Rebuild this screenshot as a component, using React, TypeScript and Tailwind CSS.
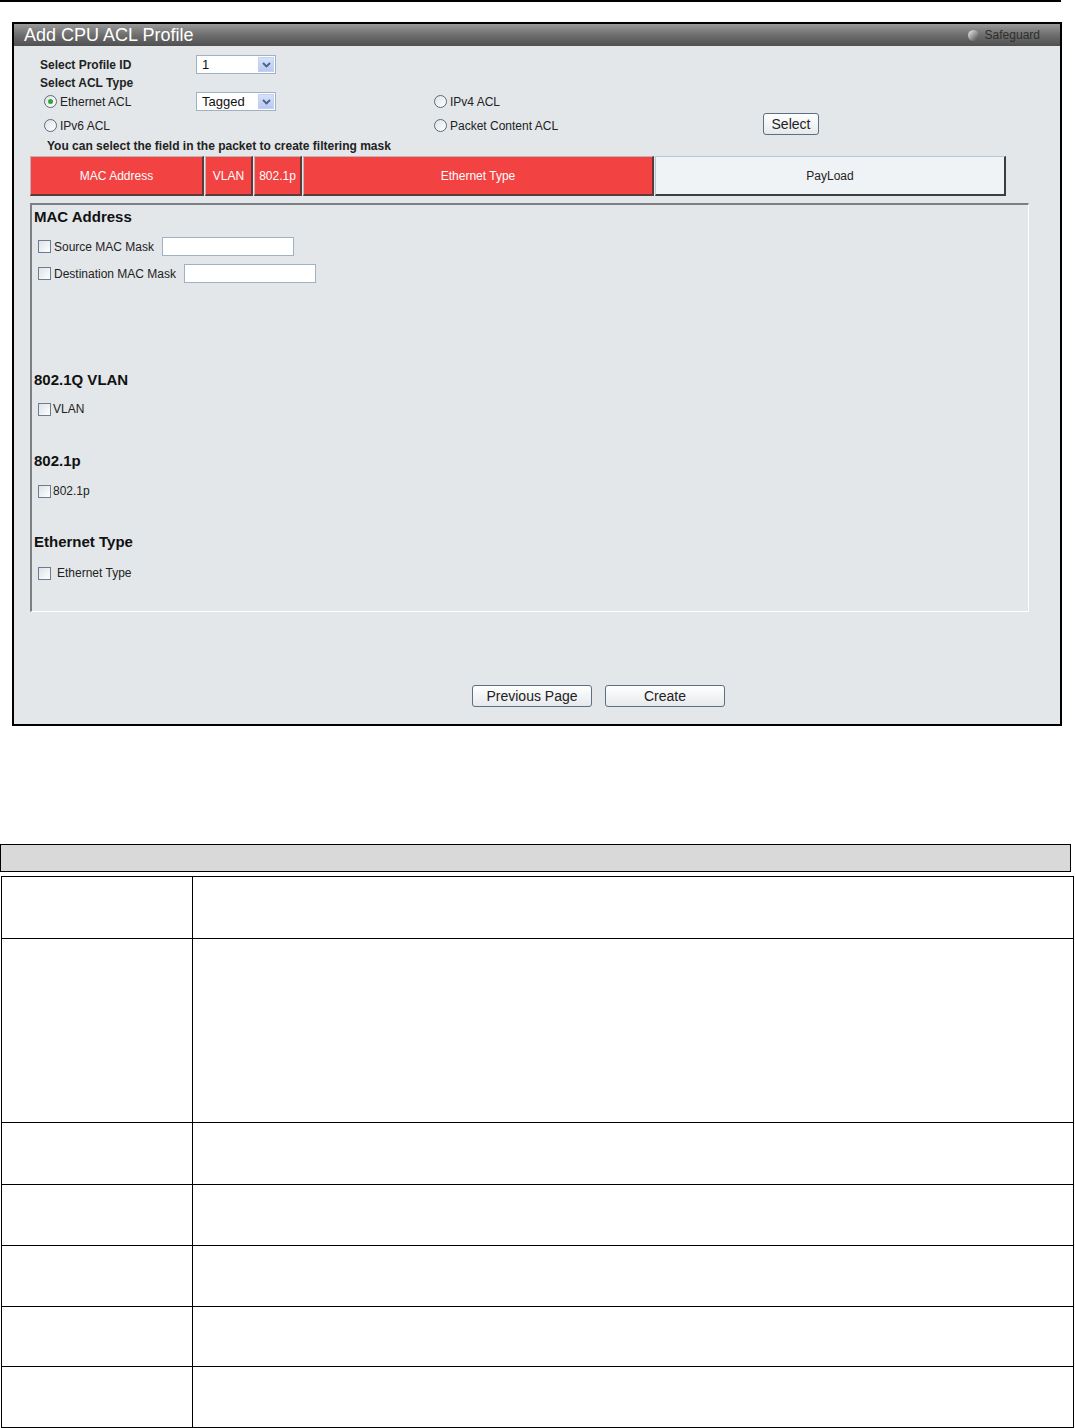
import React from 'react';

const FONT = { fontFamily: '"Liberation Sans", Arial, sans-serif' };

function Radio({ checked }: { checked?: boolean }) {
  return (
    <span className="inline-flex w-[13px] h-[13px] rounded-full border border-[#5a6a7a] bg-gradient-to-br from-[#dfe4e8] to-white items-center justify-center shrink-0">
      {checked && <span className="w-[5px] h-[5px] rounded-full bg-[#2fa83a]" />}
    </span>
  );
}

function Check() {
  return (
    <span className="inline-block w-[13px] h-[13px] border border-[#6b7d8e] bg-gradient-to-br from-[#dde3e8] to-white shrink-0" />
  );
}

function Dropdown({ value }: { value: string }) {
  return (
    <div className="w-[80px] h-[19px] border border-[#9fb1c4] bg-white flex items-center justify-between pl-[5px] pr-[1px]">
      <span className="text-[13px] text-[#111]">{value}</span>
      <span className="w-[16px] h-[15px] bg-gradient-to-b from-[#d6e2fb] to-[#b7c9f3] border border-[#c4d2ef] flex items-center justify-center">
        <svg width="9" height="6" viewBox="0 0 9 6">
          <path d="M1 1 L4.5 4.5 L8 1" fill="none" stroke="#4d6185" strokeWidth="1.8" />
        </svg>
      </span>
    </div>
  );
}

function Btn({ label, className }: { label: string; className: string }) {
  return (
    <button
      className={`h-[22px] border border-[#5c6f84] rounded-[3px] bg-gradient-to-b from-white to-[#e6e9ec] text-[14px] text-[#222] leading-none ${className}`}
    >
      {label}
    </button>
  );
}

function Seg({ label, w, payload }: { label: string; w: string; payload?: boolean }) {
  return (
    <div
      className={`${w} h-full flex items-center justify-center text-[12px] border-t border-l border-r-2 border-b-2 ${
        payload
          ? 'bg-[#f0f3f6] text-[#222] border-t-[#b8cad6] border-l-[#b8cad6] border-r-[#3d3d3d] border-b-[#3d3d3d]'
          : 'bg-[#f24242] text-white border-t-[#c9b0b0] border-l-[#c9b0b0] border-r-[#5a3a3a] border-b-[#5a3a3a]'
      }`}
    >
      {label}
    </div>
  );
}

export default function App() {
  const rowHeights = [62, 184, 62, 61, 61, 60, 61];

  return (
    <div className="w-[1075px] h-[1428px] bg-white overflow-hidden" style={FONT}>
      <div className="w-[1061px] h-[2px] bg-black" />

      {/* panel */}
      <div className="ml-[12px] mt-[20px] w-[1050px] h-[704px] border-2 border-black bg-[#e3e7ea] flex flex-col">
        <div className="h-[22px] bg-gradient-to-b from-[#9a9a9a] via-[#6e6e6e] to-[#505050] flex items-center justify-between pl-[10px] pr-[20px]">
          <span className="text-white text-[18px] leading-none">Add CPU ACL Profile</span>
          <div className="flex items-center gap-[6px]">
            <span className="w-[11px] h-[11px] rounded-full bg-gradient-to-br from-[#f2f2f2] via-[#9a9a9a] to-[#444]" />
            <span className="text-[12px] text-[#2e2e2e]">Safeguard</span>
          </div>
        </div>

        <div className="flex-1 flex flex-col text-[12px] text-[#222]">
          <div className="mt-[9px] h-[19px] flex items-center pl-[26px]">
            <span className="w-[156px] font-bold">Select Profile ID</span>
            <Dropdown value="1" />
          </div>
          <div className="h-[17px] flex items-center pl-[26px] font-bold">Select ACL Type</div>
          <div className="mt-[1px] h-[19px] flex items-center pl-[30px]">
            <span className="w-[152px] flex items-center gap-[3px]">
              <Radio checked />
              <span>Ethernet ACL</span>
            </span>
            <span className="w-[238px]">
              <Dropdown value="Tagged" />
            </span>
            <span className="flex items-center gap-[3px]">
              <Radio />
              <span>IPv4 ACL</span>
            </span>
          </div>
          <div className="mt-[3px] h-[23px] flex items-center pl-[30px]">
            <span className="w-[390px] flex items-center gap-[3px]">
              <Radio />
              <span>IPv6 ACL</span>
            </span>
            <span className="w-[329px] flex items-center gap-[3px]">
              <Radio />
              <span>Packet Content ACL</span>
            </span>
            <Btn label="Select" className="w-[56px] -mt-[3px]" />
          </div>
          <div className="h-[17px] flex items-center pl-[33px] font-bold">
            You can select the field in the packet to create filtering mask
          </div>

          {/* packet bar */}
          <div className="mt-[2px] ml-[16px] h-[40px] w-[976px] flex gap-[1px]">
            <Seg label="MAC Address" w="w-[174px]" />
            <Seg label="VLAN" w="w-[48px]" />
            <Seg label="802.1p" w="w-[48px]" />
            <Seg label="Ethernet Type" w="w-[351px]" />
            <Seg label="PayLoad" w="w-[351px]" payload />
          </div>

          {/* fieldset */}
          <div className="mt-[7px] ml-[16px] w-[999px] h-[409px] border-t-2 border-l-2 border-[#7b7f83] border-r border-b border-r-white border-b-white pl-[2px] flex flex-col">
            <div className="mt-[3px] h-[18px] flex items-center font-bold text-[15px] text-[#111]">MAC Address</div>
            <div className="mt-[11px] h-[19px] flex items-center pl-[4px] gap-[3px]">
              <Check />
              <span>Source MAC Mask</span>
              <span className="ml-[5px] w-[132px] h-[19px] bg-white border border-[#9fb1c4]" />
            </div>
            <div className="mt-[8px] h-[19px] flex items-center pl-[4px] gap-[3px]">
              <Check />
              <span>Destination MAC Mask</span>
              <span className="ml-[5px] w-[132px] h-[19px] bg-white border border-[#9fb1c4]" />
            </div>

            <div className="mt-[88px] h-[18px] flex items-center font-bold text-[15px] text-[#111]">802.1Q VLAN</div>
            <div className="mt-[12px] h-[16px] flex items-center pl-[4px] gap-[2px]">
              <Check />
              <span>VLAN</span>
            </div>

            <div className="mt-[35px] h-[18px] flex items-center font-bold text-[15px] text-[#111]">802.1p</div>
            <div className="mt-[13px] h-[16px] flex items-center pl-[4px] gap-[2px]">
              <Check />
              <span>802.1p</span>
            </div>

            <div className="mt-[34px] h-[18px] flex items-center font-bold text-[15px] text-[#111]">Ethernet Type</div>
            <div className="mt-[14px] h-[16px] flex items-center pl-[4px] gap-[6px]">
              <Check />
              <span>Ethernet Type</span>
            </div>
          </div>

          <div className="mt-[73px] flex pl-[458px] gap-[13px]">
            <Btn label="Previous Page" className="w-[120px]" />
            <Btn label="Create" className="w-[120px]" />
          </div>
        </div>
      </div>

      {/* description table */}
      <div className="mt-[118px] w-[1071px] h-[28px] bg-[#d9d9d9] border-[1.5px] border-black" />
      <div className="mt-[4px] ml-[1px] w-[1073px] border-t border-l border-black">
        {rowHeights.map((h, i) => (
          <div key={i} className="flex border-b border-black" style={{ height: h }}>
            <div className="w-[191px] border-r border-black" />
            <div className="flex-1 border-r border-black" />
          </div>
        ))}
      </div>
    </div>
  );
}
